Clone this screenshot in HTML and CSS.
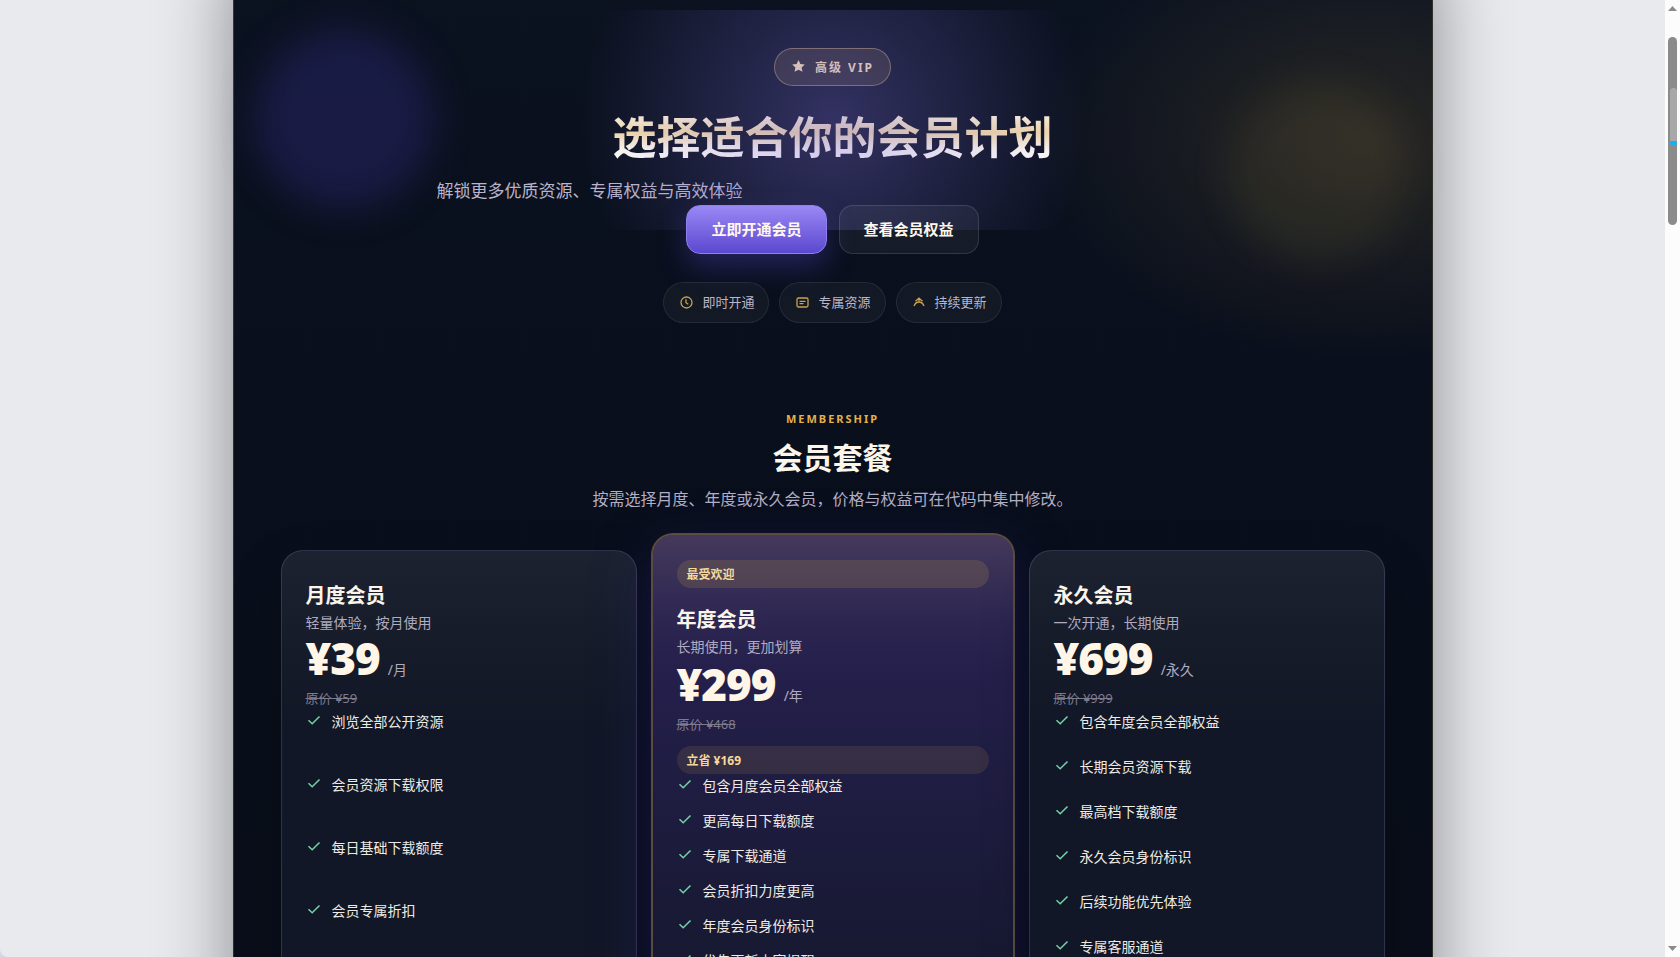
FILE: index.html
```html
<!DOCTYPE html>
<html lang="zh-CN">

<head>
  <meta charset="UTF-8">
  <meta name="viewport" content="width=device-width, initial-scale=1.0">
  <title>高级 VIP</title>
  <link rel="stylesheet" href="styles.css">
</head>

<body>
  <!-- check mark shared by all feature lists -->
  <svg class="sprite" aria-hidden="true">
    <symbol id="check" viewBox="0 0 18 18">
      <path d="M2.500 9.200l3.700 3.600 7.300-7.300" fill="none" stroke="currentColor" stroke-width="1.5" />
    </symbol>
  </svg>

  <main class="page">
    <div class="shell">
      <div class="orb orb_violet"></div>
      <div class="orb orb_gold"></div>

      <section class="hero">
        <div class="hero_glow"></div>
        <div class="hero_badge">
          <svg width="16" height="16" viewBox="0 0 16 16" aria-hidden="true">
            <path d="M7.500 1l1.900 4 4.400.5-3.200 3 .9 4.300-4-2.100-4 2.100.9-4.300-3.200-3L5.600 5z" fill="currentColor" />
          </svg>
          <span>高级 VIP</span>
        </div>
        <h1 class="hero_title">选择适合你的会员计划</h1>
        <p class="hero_desc">解锁更多优质资源、专属权益与高效体验</p>
        <div class="hero_btns">
          <button type="button" class="btn btn_primary">立即开通会员</button>
          <button type="button" class="btn btn_ghost">查看会员权益</button>
        </div>
        <ul class="chips">
          <li class="chip">
            <svg width="16" height="16" viewBox="0 0 16 16" aria-hidden="true">
              <circle cx="8.500" cy="8.500" r="5.500" />
              <path d="M8 5.300v3.400l2.300 1.600" />
            </svg>
            即时开通
          </li>
          <li class="chip">
            <svg width="16" height="16" viewBox="0 0 16 16" aria-hidden="true">
              <rect x="3" y="4" width="11" height="9" rx="1.500" />
              <path d="M5.500 7.300h6M5.500 9.700h4" />
            </svg>
            专属资源
          </li>
          <li class="chip">
            <svg width="16" height="16" viewBox="0 0 16 16" aria-hidden="true">
              <path d="M4.500 7.200L8 4.200l3.500 3M3 12c1-2.500 2.800-4 5-4s4 1.500 5 4M8 4.500V8" />
            </svg>
            持续更新
          </li>
        </ul>
      </section>

      <section class="plans">
        <div class="plans_eyebrow">MEMBERSHIP</div>
        <h2 class="plans_title">会员套餐</h2>
        <p class="plans_desc">按需选择月度、年度或永久会员，价格与权益可在代码中集中修改。</p>

        <div class="cards">
          <article class="card card_month">
            <h3 class="card_name">月度会员</h3>
            <p class="card_desc">轻量体验，按月使用</p>
            <div class="price"><strong>¥39</strong><span>/月</span></div>
            <del class="old_price">原价 ¥59</del>
            <ul class="features">
              <li><svg><use href="#check" /></svg>浏览全部公开资源</li>
              <li><svg><use href="#check" /></svg>会员资源下载权限</li>
              <li><svg><use href="#check" /></svg>每日基础下载额度</li>
              <li><svg><use href="#check" /></svg>会员专属折扣</li>
            </ul>
          </article>

          <article class="card card_year">
            <div class="tag tag_hot">最受欢迎</div>
            <h3 class="card_name">年度会员</h3>
            <p class="card_desc">长期使用，更加划算</p>
            <div class="price"><strong>¥299</strong><span>/年</span></div>
            <del class="old_price">原价 ¥468</del>
            <div class="tag tag_save">立省 ¥169</div>
            <ul class="features">
              <li><svg><use href="#check" /></svg>包含月度会员全部权益</li>
              <li><svg><use href="#check" /></svg>更高每日下载额度</li>
              <li><svg><use href="#check" /></svg>专属下载通道</li>
              <li><svg><use href="#check" /></svg>会员折扣力度更高</li>
              <li><svg><use href="#check" /></svg>年度会员身份标识</li>
              <li><svg><use href="#check" /></svg>优先更新内容提醒</li>
            </ul>
          </article>

          <article class="card card_forever">
            <h3 class="card_name">永久会员</h3>
            <p class="card_desc">一次开通，长期使用</p>
            <div class="price"><strong>¥699</strong><span>/永久</span></div>
            <del class="old_price">原价 ¥999</del>
            <ul class="features">
              <li><svg><use href="#check" /></svg>包含年度会员全部权益</li>
              <li><svg><use href="#check" /></svg>长期会员资源下载</li>
              <li><svg><use href="#check" /></svg>最高档下载额度</li>
              <li><svg><use href="#check" /></svg>永久会员身份标识</li>
              <li><svg><use href="#check" /></svg>后续功能优先体验</li>
              <li><svg><use href="#check" /></svg>专属客服通道</li>
            </ul>
          </article>
        </div>
      </section>
    </div>
  </main>

  <div class="scrollbar" aria-hidden="true">
    <svg width="9" height="5" viewBox="0 0 9 5"><path d="M0 5L4.500 0 9 5z" fill="#8b8b8b" /></svg>
    <div class="scrollbar_track">
      <div class="scrollbar_thumb">
        <div class="scrollbar_mark"></div>
      </div>
    </div>
    <svg width="9" height="5" viewBox="0 0 9 5"><path d="M0 0h9L4.500 5z" fill="#8b8b8b" /></svg>
  </div>
</body>

</html>
```
FILE: styles.css
```css
* {
  box-sizing: border-box;
}

body {
  height: 100vh;
  margin: 0;
  overflow: hidden;

  display: flex;

  background-color: #d6d6e4;
  font-family: "Noto Sans", "Noto Sans CJK SC", sans-serif;
}

h1,
h2,
h3,
p,
ul {
  margin: 0;
  padding: 0;
}

ul {
  list-style: none;
}

.sprite {
  display: none;
}

.page {
  flex: 1;
  overflow: hidden;

  background-color: #e8eaee;
  border-bottom-left-radius: 8px;
}

.shell {
  position: relative;
  max-width: 1200px;
  margin: -40px auto 0;
  padding: 88px 47px 0;

  border: solid rgba(214, 175, 100, 0.2);
  border-width: 0 1px;
  background:
    radial-gradient(330px 220px at 1130px 180px, rgba(214, 170, 70, 0.15), transparent),
    repeating-linear-gradient(90deg, transparent 0 71px, rgba(255, 255, 255, 0.004) 71px 72px),
    linear-gradient(#0b1220, #090f1c 400px, #080d18);
  background-color: #090f1c;
  box-shadow: 0 0 70px rgba(0, 0, 0, 0.42);
}

.orb {
  position: absolute;
  border-radius: 50%;
  filter: blur(18px);
}

.orb_violet {
  top: 69px;
  left: 20px;
  width: 180px;
  height: 180px;

  background-color: rgba(52, 48, 140, 0.34);
}

.orb_gold {
  top: 122px;
  right: 24px;
  width: 180px;
  height: 180px;

  background-color: rgba(150, 130, 60, 0.11);
}

/* hero */

.hero {
  position: relative;

  display: flex;
  flex-direction: column;
  align-items: center;
}

/* lies over the badge and the title, under the buttons */
.hero_glow {
  position: absolute;
  top: -38px;
  left: 50%;
  width: 560px;
  height: 220px;
  margin-left: -280px;
  z-index: 1;

  background: radial-gradient(circle, rgba(124, 108, 220, 0.36), transparent 84%);
}

.hero_badge {
  height: 38px;
  padding: 0 16px;

  display: flex;
  align-items: center;
  gap: 8px;

  border: 1px solid rgba(232, 196, 130, 0.45);
  border-radius: 19px;
  background-color: rgba(214, 175, 100, 0.16);

  color: #f5deb0;
  font-size: 12px;
  font-weight: 700;
  letter-spacing: 2px;
}

.hero_title {
  margin-top: 23px;

  background: linear-gradient(#fdf3dc 10%, #f2d9a6 42%, #fdf8ef 72%, #ffffff);
  background-clip: text;
  -webkit-background-clip: text;
  color: transparent;

  font-size: 44px;
  line-height: 56px;
}

.hero_desc {
  width: 100%;
  max-width: 792px;
  margin-top: 12px;

  color: #b9b4cc;
  font-size: 17px;
  line-height: 28px;
}

.hero_btns {
  position: relative;
  z-index: 2;

  display: flex;
  gap: 12px;
}

.btn {
  height: 49px;
  padding: 0 24px 2px;

  border-radius: 14px;

  color: #fff8ec;
  font-family: inherit;
  font-size: 15px;
  font-weight: 700;
}

.btn_primary {
  border: 1px solid #8f7ff0;
  background: linear-gradient(#9a88f5, #5b48d0);
  box-shadow: 0 12px 28px rgba(90, 70, 210, 0.35);
}

.btn_ghost {
  border: 1px solid rgba(255, 255, 255, 0.12);
  background-color: rgba(255, 255, 255, 0.05);
}

.chips {
  margin-top: 28px;

  display: flex;
  gap: 10px;
}

.chip {
  height: 41px;
  padding: 0 14px 2px;

  display: flex;
  align-items: center;
  gap: 8px;

  border: 1px solid rgba(255, 255, 255, 0.08);
  border-radius: 21px;
  background-color: rgba(255, 255, 255, 0.04);

  color: #bab5cb;
  font-size: 13px;
}

.chip svg {
  fill: none;
  stroke: #c9a24c;
  stroke-width: 1.3;
}

/* plans */

.plans {
  position: relative;
  margin-top: 86px;

  text-align: center;
}

.plans_eyebrow {
  color: #e5b04a;
  font-size: 11px;
  font-weight: 700;
  line-height: 20px;
  letter-spacing: 2px;
}

.plans_title {
  margin-top: 9px;

  color: #fcf6ea;
  font-size: 30px;
  line-height: 40px;
}

.plans_desc {
  margin-top: 8px;

  color: #b4aec6;
  font-size: 16px;
  line-height: 26px;
}

.cards {
  margin-top: 38px;

  display: grid;
  grid-template-columns: 356fr 364fr 356fr;
  gap: 14px;

  text-align: left;
}

.card {
  min-height: 620px;
  padding: 30px 24px 24px;

  border: 1px solid rgba(150, 140, 190, 0.24);
  border-radius: 22px;
  background: linear-gradient(#1d2231, #151b29 100px, #111726 180px);
  box-shadow: 0 20px 50px rgba(0, 0, 0, 0.22);
}

.card_year {
  margin-top: -17px;
  padding-top: 25px;

  border: 2px solid rgba(225, 180, 130, 0.38);
  background: linear-gradient(#45395c, #2b2550 90px, #241f4b 140px, #171932 420px, #141828) padding-box;
  box-shadow: 0 20px 60px rgba(50, 35, 130, 0.4);
}

.card_name {
  color: #faf4ea;
  font-size: 20px;
  line-height: 30px;
}

.card_desc {
  margin-top: 1px;

  color: #b0abc0;
  font-size: 14px;
  line-height: 22px;
}

.price {
  height: 50px;

  display: flex;
  align-items: baseline;
  gap: 8px;
}

.price strong {
  color: #fff6e8;
  font-size: 44px;
  font-weight: 900;
  line-height: 48px;
  letter-spacing: -1px;
}

.price span {
  color: #b0abc0;
  font-size: 14px;
  line-height: 22px;
}

.old_price {
  margin-top: 4px;

  display: block;

  color: #7f7b8e;
  font-size: 13px;
  line-height: 20px;
}

.tag {
  height: 28px;
  padding: 0 10px;

  border-radius: 14px;

  color: #f3d99c;
  font-size: 12px;
  font-weight: 700;
  line-height: 30px;
}

.tag_hot {
  margin-bottom: 17px;
  background-color: rgba(214, 175, 70, 0.16);
}

.tag_save {
  margin-top: 12px;
  background-color: rgba(214, 175, 70, 0.12);
}

.features {
  margin-top: 3px;

  display: grid;
}

.features li {
  display: flex;
  gap: 8px;

  color: #efebe4;
  font-size: 14px;
  line-height: 22px;
}

.features svg {
  width: 18px;
  height: 18px;

  color: #74d3a8;
}

.card_month .features {
  grid-auto-rows: 63px;
}

.card_year .features {
  margin-top: 1px;
  grid-auto-rows: 35px;
}

.card_year .price {
  margin-top: 2px;
}

.card_forever .features {
  grid-auto-rows: 45px;
}

/* scrollbar */

.scrollbar {
  width: 15px;
  padding: 6px 0;

  display: flex;
  flex-direction: column;
  align-items: center;

  background-color: #fcfcfc;
}

.scrollbar_track {
  flex: 1;
  padding-top: 26px;
}

.scrollbar_thumb {
  width: 9px;
  height: 188px;
  padding: 51px 0 0 2px;

  border-radius: 5px;
  background-color: #8b8b8b;
}

.scrollbar_mark {
  width: 7px;
  height: 58px;

  border-radius: 4px;
  background: linear-gradient(#a8a8a8 53px, #1ab0f0 53px);
}
```
